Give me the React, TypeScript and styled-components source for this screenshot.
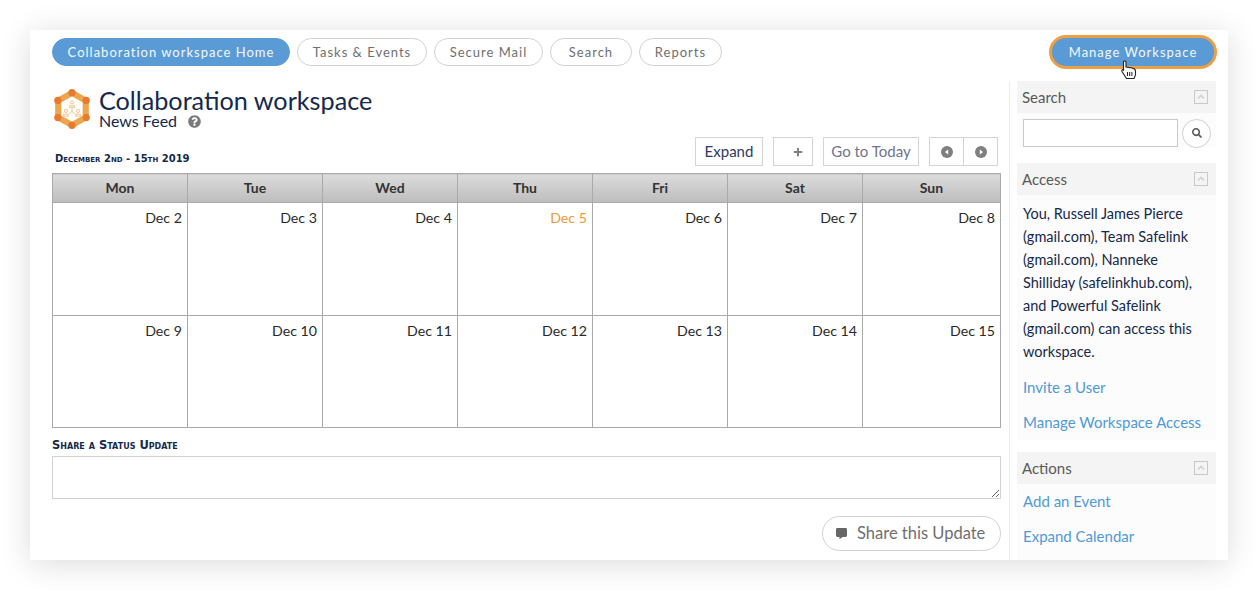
import * as React from 'react'
import styled, { createGlobalStyle } from 'styled-components'
import { FaCommentAlt, FaPlus, FaQuestionCircle, FaSearch } from 'react-icons/fa'

const GlobalStyle = createGlobalStyle`
  html, body {
    margin: 0;
    padding: 0;
    height: 590px;
    overflow: hidden;
    background: #fff;
    font-family: 'Lato', 'Noto Sans', sans-serif;
  }
`

const Page = styled.div`
  box-sizing: border-box;
  width: 1259px;
  height: 590px;
  padding: 30px 31px 30px 30px;
`
const Card = styled.div`
  position: relative;
  height: 530px;
  background: #fff;
  box-shadow: 0 4px 30px rgba(0, 0, 0, 0.14);
  overflow: hidden;
`
const Nav = styled.div`
  display: flex;
  align-items: center;
  gap: 7px;
  height: 51px;
  padding: 0 11px 7px 22px;
  box-sizing: border-box;
`
const Pill = styled.div<{ $active?: boolean; $width: number }>`
  box-sizing: border-box;
  width: ${p => p.$width}px;
  height: 28px;
  line-height: 26px;
  border-radius: 14px;
  text-align: center;
  font-size: 13px;
  letter-spacing: 1px;
  color: ${p => (p.$active ? '#f2f7fb' : '#6f6f6f')};
  background: ${p => (p.$active ? '#5b9bd5' : '#fff')};
  border: 1px solid ${p => (p.$active ? '#5b9bd5' : '#d2d2d2')};
`
const ManagePill = styled(Pill)`
  height: 34px;
  line-height: 28px;
  border-radius: 17px;
  margin-left: auto;
  border: 3px solid #eda043;
`
const Cursor = styled.svg`
  position: absolute;
  left: 1091px;
  top: 30px;
`
const Body = styled.div`
  display: flex;
  height: 479px;
`
const Main = styled.div`
  width: 949px;
  margin-left: 22px;
`
const TitleRow = styled.div`
  display: flex;
  gap: 9px;
  padding: 8px 0 0 2px;
  height: 48px;
`
const TitleText = styled.div`
  color: #14294b;
  margin-top: -1px;
`
const Title = styled.h1`
  margin: 0;
  font-size: 25.2px;
  line-height: 24px;
  font-weight: 400;
`
const Subtitle = styled.div`
  display: flex;
  align-items: center;
  gap: 11px;
  font-size: 16px;
  line-height: 18px;
`
const HelpIcon = styled(FaQuestionCircle)`
  color: #7b7b7b;
  font-size: 13px;
`
const ToolRow = styled.div`
  display: flex;
  align-items: flex-end;
  height: 29px;
  padding-right: 3px;
`
const DateLabel = styled.div`
  font-family: 'DejaVu Sans', sans-serif;
  font-variant: small-caps;
  font-weight: 700;
  font-size: 10px;
  line-height: 14px;
  color: #14294b;
  margin: 0 auto 0 3px;
`
const ToolButton = styled.div<{ $width: number; $muted?: boolean }>`
  box-sizing: border-box;
  display: flex;
  align-items: center;
  justify-content: center;
  width: ${p => p.$width}px;
  height: 29px;
  margin-left: 10px;
  padding-bottom: 2px;
  font-size: 15px;
  color: ${p => (p.$muted ? '#6f748c' : '#2f3a5c')};
  border: 1px solid #d4d4d4;
`
const PlusIcon = styled(FaPlus)`
  color: #7f7f7f;
  font-size: 10px;
  margin: 2px 0 0 10px;
`
const Pager = styled.div`
  display: flex;
  margin-left: 10px;
  border: 1px solid #d4d4d4;
  height: 29px;
  box-sizing: border-box;
`
const PagerButton = styled.div`
  width: 33px;
  display: flex;
  align-items: center;
  justify-content: center;
  & + & {
    border-left: 1px solid #d4d4d4;
  }
`
const Calendar = styled.table`
  width: 948px;
  margin-top: 7px;
  border-collapse: collapse;
  table-layout: fixed;
  font-size: 14px;
`
const HeadCell = styled.th`
  box-sizing: border-box;
  height: 29px;
  padding: 0 0 2px;
  font-size: 14px;
  font-weight: 700;
  color: #333;
  background: linear-gradient(#dcdcdc, #bdbdbd);
  border: 1px solid #aaa;
`
const DayCell = styled.td<{ $today?: boolean; $last?: boolean }>`
  height: ${p => (p.$last ? 105 : 106)}px;
  padding: 6px 5px 0 0;
  text-align: right;
  vertical-align: top;
  font-size: 14.2px;
  line-height: 18px;
  color: ${p => (p.$today ? '#ee9a37' : '#2a2a2a')};
  border: 1px solid #aaa;
`
const ShareLabel = styled(DateLabel)`
  margin: 10px 0 4px;
  font-size: 11.5px;
`
const StatusBox = styled.textarea`
  display: block;
  box-sizing: border-box;
  width: 949px;
  height: 43px;
  border: 1px solid #d2d2d2;
  outline: none;
  background: #fff;
`
const ShareRow = styled.div`
  display: flex;
  justify-content: flex-end;
  margin-top: 17px;
`
const ShareButton = styled.div`
  box-sizing: border-box;
  display: flex;
  align-items: center;
  gap: 10px;
  width: 179px;
  height: 35px;
  padding: 0 0 2px 13px;
  border: 1px solid #d2d2d2;
  border-radius: 18px;
  font-size: 16.5px;
  color: #6f6f6f;
`
const CommentIcon = styled(FaCommentAlt)`
  color: #666;
  font-size: 11px;
  margin-top: 2px;
`
const Side = styled.div`
  box-sizing: border-box;
  display: flex;
  flex-direction: column;
  width: 219px;
  margin-left: 8px;
  padding-left: 7px;
  border-left: 1px solid #ececec;
`
const Panel = styled.div<{ $fill?: boolean; $gap?: number; $pad?: number }>`
  width: 199px;
  background: #fcfcfc;
  margin-bottom: ${p => p.$gap || 0}px;
  padding-bottom: ${p => p.$pad || 0}px;
  flex: ${p => (p.$fill ? 1 : '0 0 auto')};
`
const PanelHead = styled.div`
  box-sizing: border-box;
  display: flex;
  align-items: center;
  justify-content: space-between;
  height: 32px;
  padding: 0 8px 0 5px;
  background: #f4f4f4;
  font-size: 15px;
  color: #595959;
`
const Collapse = styled.div`
  box-sizing: border-box;
  display: flex;
  align-items: center;
  justify-content: center;
  width: 14px;
  height: 14px;
  border: 1px solid #c9c9c9;
`
const SearchRow = styled.div`
  display: flex;
  align-items: center;
  gap: 4px;
  height: 28px;
  padding: 0 5px 0 6px;
  margin-top: 6px;
`
const SearchBox = styled.div`
  box-sizing: border-box;
  width: 155px;
  height: 28px;
  background: #fff;
  border: 1px solid #c9c9c9;
`
const SearchButton = styled.div`
  box-sizing: border-box;
  flex: none;
  display: flex;
  align-items: center;
  justify-content: center;
  width: 29px;
  height: 29px;
  background: #fff;
  border: 1px solid #cfcfcf;
  border-radius: 50%;
  color: #555;
  font-size: 10px;
`
const AccessText = styled.div`
  padding: 7px 8px 7px 6px;
  font-size: 14.5px;
  line-height: 23px;
  color: #14294b;
`
const SideLink = styled.div<{ $first?: boolean }>`
  padding: 0 6px;
  margin-top: ${p => (p.$first ? 8 : 17)}px;
  font-size: 15px;
  line-height: 18px;
  color: #4f9ad6;
`

const CircleArrow = ({ left }: { left?: boolean }) => (
  <svg width="12" height="12" viewBox="0 0 12 12">
    <circle cx="6" cy="6" r="6" fill="#7f7f7f" />
    <path d={left ? 'M7.2 3.4 L4 6 L7.2 8.6 Z' : 'M4.8 3.4 L8 6 L4.8 8.6 Z'} fill="#fff" />
  </svg>
)

const UpChevron = () => (
  <svg width="8" height="6" viewBox="0 0 8 6">
    <path d="M1 4.5 L4 1.5 L7 4.5" fill="none" stroke="#d0d0d0" strokeWidth="1.6" />
  </svg>
)

const Logo = () => (
  <svg width="36" height="40" viewBox="0 0 38 42">
    <path d="M19 4 L33.5 12 L33.5 30 L19 38 L4.5 30 L4.5 12 Z" fill="none" stroke="#eda54e" strokeWidth="6.5" />
    <g fill="#e67a30">
      <circle cx="19" cy="3.8" r="3.8" />
      <circle cx="34" cy="12" r="3.8" />
      <circle cx="34" cy="30" r="3.8" />
      <circle cx="19" cy="38.2" r="3.8" />
      <circle cx="4" cy="30" r="3.8" />
      <circle cx="4" cy="12" r="3.8" />
    </g>
    <g fill="none" stroke="#f2b877" strokeWidth="0.9">
      <circle cx="19" cy="14" r="1.7" />
      <path d="M16.5 19.5 V17.5 H21.5 V19.5 Z" />
      <circle cx="12.5" cy="23" r="1.7" />
      <path d="M10 28.5 V26.5 H15 V28.5 Z" />
      <circle cx="25.5" cy="23" r="1.7" />
      <path d="M23 28.5 V26.5 H28 V28.5 Z" />
      <path d="M19 19.5 V23 M19 23 L16.5 26.5 M19 23 L21.5 26.5" />
    </g>
  </svg>
)

const weeks = [
  ['Dec 2', 'Dec 3', 'Dec 4', 'Dec 5', 'Dec 6', 'Dec 7', 'Dec 8'],
  ['Dec 9', 'Dec 10', 'Dec 11', 'Dec 12', 'Dec 13', 'Dec 14', 'Dec 15'],
]
const days = ['Mon', 'Tue', 'Wed', 'Thu', 'Fri', 'Sat', 'Sun']

const PanelHeader = ({ title }: { title: string }) => (
  <PanelHead>
    {title}
    <Collapse>
      <UpChevron />
    </Collapse>
  </PanelHead>
)

export default function App() {
  return (
    <Page>
      <GlobalStyle />
      <Card>
        <Nav>
          <Pill $active $width={238}>Collaboration workspace Home</Pill>
          <Pill $width={130}>Tasks &amp; Events</Pill>
          <Pill $width={109}>Secure Mail</Pill>
          <Pill $width={82}>Search</Pill>
          <Pill $width={83}>Reports</Pill>
          <ManagePill $active $width={168}>Manage Workspace</ManagePill>
        </Nav>
        <Cursor width="16" height="20" viewBox="0 0 16 20">
          <path
            d="M2.5 1.5 C3.5 .5 5 1 5 2.5 V7 L11 8 C13 8.5 14.5 10 14.5 11 V15 L13 18.5 H5.5 L1 11.5 C.5 10 1.5 9 2.5 10 V2.5 Z"
            fill="#fff"
            stroke="#222"
            strokeWidth="1.1"
          />
          <path d="M6.5 12 V16 M8.7 12 V16 M10.9 12 V16" stroke="#222" strokeWidth="1" />
        </Cursor>
        <Body>
          <Main>
            <TitleRow>
              <Logo />
              <TitleText>
                <Title>Collaboration workspace</Title>
                <Subtitle>
                  News Feed <HelpIcon />
                </Subtitle>
              </TitleText>
            </TitleRow>
            <ToolRow>
              <DateLabel>December 2nd - 15th 2019</DateLabel>
              <ToolButton $width={68}>Expand</ToolButton>
              <ToolButton $width={40}><PlusIcon /></ToolButton>
              <ToolButton $width={96} $muted>Go to Today</ToolButton>
              <Pager>
                <PagerButton><CircleArrow left /></PagerButton>
                <PagerButton><CircleArrow /></PagerButton>
              </Pager>
            </ToolRow>
            <Calendar>
              <colgroup>
                {days.map((d, i) => <col key={d} width={i < 6 ? 135 : 138} />)}
              </colgroup>
              <thead>
                <tr>
                  {days.map(d => <HeadCell key={d}>{d}</HeadCell>)}
                </tr>
              </thead>
              <tbody>
                {weeks.map((w, i) => (
                  <tr key={i}>
                    {w.map(d => <DayCell key={d} $last={i === 1} $today={d === 'Dec 5'}>{d}</DayCell>)}
                  </tr>
                ))}
              </tbody>
            </Calendar>
            <ShareLabel>Share a Status Update</ShareLabel>
            <StatusBox />
            <ShareRow>
              <ShareButton>
                <CommentIcon />
                Share this Update
              </ShareButton>
            </ShareRow>
          </Main>
          <Side>
            <Panel $gap={16}>
              <PanelHeader title="Search" />
              <SearchRow>
                <SearchBox />
                <SearchButton><FaSearch /></SearchButton>
              </SearchRow>
            </Panel>
            <Panel $gap={12} $pad={9}>
              <PanelHeader title="Access" />
              <AccessText>
                You, Russell James Pierce (gmail.com), Team Safelink (gmail.com), Nanneke Shilliday (safelinkhub.com), and Powerful Safelink (gmail.com) can access this workspace.
              </AccessText>
              <SideLink $first>Invite a User</SideLink>
              <SideLink>Manage Workspace Access</SideLink>
            </Panel>
            <Panel $fill>
              <PanelHeader title="Actions" />
              <SideLink $first>Add an Event</SideLink>
              <SideLink>Expand Calendar</SideLink>
            </Panel>
          </Side>
        </Body>
      </Card>
    </Page>
  )
}
